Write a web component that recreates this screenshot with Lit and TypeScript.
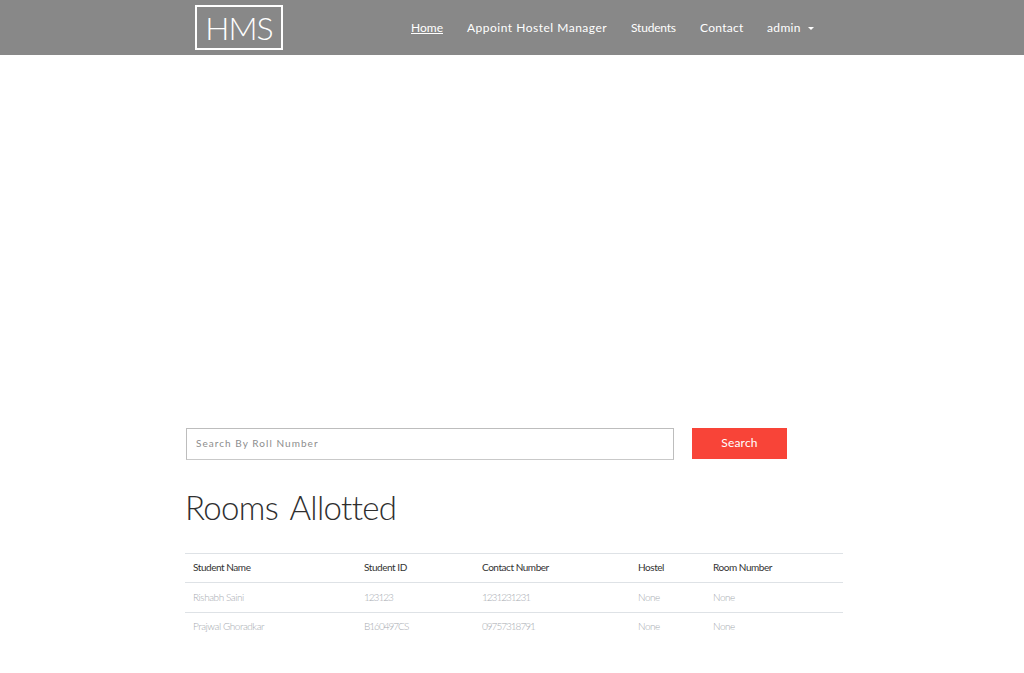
import { LitElement, html, css } from "lit";
import { customElement } from "lit/decorators.js";

const rows = [
  ["Rishabh Saini", "123123", "1231231231", "None", "None"],
  ["Prajwal Ghoradkar", "B160497CS", "09757318791", "None", "None"],
];

@customElement("app-root")
export class AppRoot extends LitElement {
  static styles = css`
    :host { display: block; height: 673px; overflow: hidden; background: #fff; font-family: "Lato", "Liberation Sans", sans-serif; }
    .nav { height: 55px; background: #888; display: flex; align-items: center; padding-left: 195px; box-sizing: border-box; }
    .logo { width: 88px; height: 45px; box-sizing: border-box; border: 2px solid #fff; color: #fff; font-size: 32px; font-weight: 300; display: flex; align-items: center; justify-content: center; letter-spacing: -1px; }
    .links { display: grid; grid-template-columns: 32px 140px 45px 44px auto; align-items: center; margin-left: 128px; column-gap: 24px; color: #fff; font-size: 12px; padding-bottom: 1px; }
    .links span { white-space: nowrap; }
    .home { text-decoration: underline; letter-spacing: 0; }
    .appoint { letter-spacing: 0.5px; }
    .students { letter-spacing: -0.2px; }
    .contact { letter-spacing: 0.3px; }
    .admin { letter-spacing: 0.35px; margin-left: -1px; }
    .caret { display: inline-block; width: 0; height: 0; border-left: 3px solid transparent; border-right: 3px solid transparent; border-top: 3px solid #fff; margin-left: 7px; vertical-align: 2px; }
    main { padding: 373px 0 0 185px; width: 658px; }
    .search { display: flex; align-items: flex-start; padding-left: 1px; }
    .input { width: 488px; height: 32px; box-sizing: border-box; border: 1px solid #bdbdbd; border-bottom-color: #c9c9c9; display: flex; align-items: center; padding: 0 0 2px 9px; font-size: 10px; letter-spacing: 1.05px; color: #8d8d8d; }
    .btn { width: 95px; height: 31px; box-sizing: border-box; padding-bottom: 2px; margin-left: 18px; background: #f84438; color: #fff; font-size: 12px; letter-spacing: 0.2px; display: flex; align-items: center; justify-content: center; }
    h1 { margin: 27px 0 0 0; font-size: 33px; line-height: 40px; font-weight: 300; color: #2f2f2f; letter-spacing: -0.65px; word-spacing: 4px; }
    table { margin-top: 26px; width: 658px; border-collapse: collapse; table-layout: fixed; font-size: 10px; }
    th, td { text-align: left; padding: 0 0 2px 8px; border-top: 1px solid #dee2e6; font-weight: 300; white-space: nowrap; box-sizing: border-box; }
    th { height: 29px; color: #333; font-weight: 400; letter-spacing: -0.45px; }
    td { height: 30px; color: #a6aab0; letter-spacing: -0.45px; }
    td.num { letter-spacing: -1px; }
    tr.last td { padding-bottom: 4px; }
    .c1 { width: 171px; } .c2 { width: 118px; } .c3 { width: 156px; } .c4 { width: 75px; }
  `;

  render() {
    return html`
      <div class="nav">
        <div class="logo">HMS</div>
        <div class="links">
          <span class="home">Home</span>
          <span class="appoint">Appoint Hostel Manager</span>
          <span class="students">Students</span>
          <span class="contact">Contact</span>
          <span class="admin">admin<i class="caret"></i></span>
        </div>
      </div>
      <main>
        <div class="search">
          <div class="input">Search By Roll Number</div>
          <div class="btn">Search</div>
        </div>
        <h1>Rooms Allotted</h1>
        <table>
          <colgroup><col class="c1" /><col class="c2" /><col class="c3" /><col class="c4" /><col /></colgroup>
          <thead>
            <tr><th>Student Name</th><th>Student ID</th><th>Contact Number</th><th>Hostel</th><th>Room Number</th></tr>
          </thead>
          <tbody>
            ${rows.map((r, n) => html`<tr class=${n === rows.length - 1 ? "last" : ""}>${r.map((c, i) => html`<td class=${i === 1 || i === 2 ? "num" : ""}>${c}</td>`)}</tr>`)}
          </tbody>
        </table>
      </main>
    `;
  }
}
